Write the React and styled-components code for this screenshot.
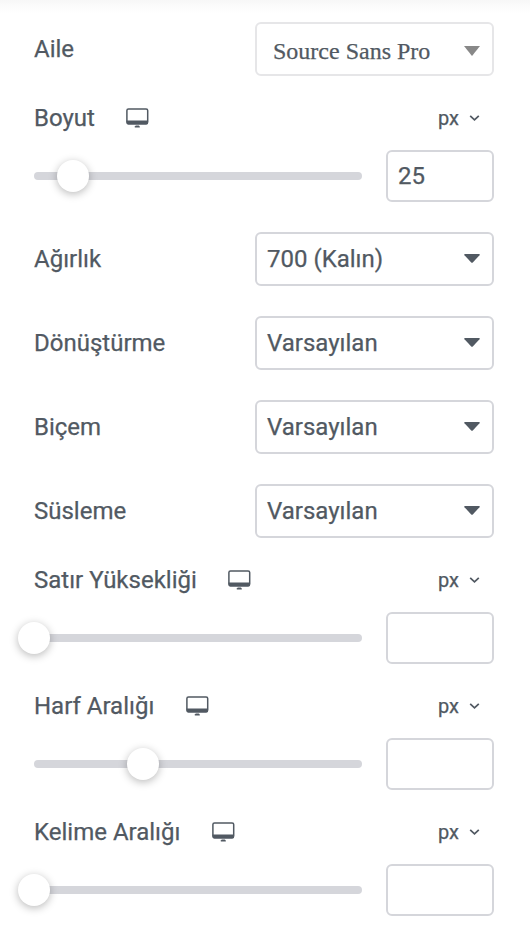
import React from 'react';
import styled, { createGlobalStyle } from 'styled-components';

const GlobalStyle = createGlobalStyle`
  * { box-sizing: border-box; }
  body { margin: 0; background: #fff; }
`;

const Panel = styled.main`
  display: flex;
  flex-direction: column;
  gap: 30px;
  width: 530px;
  height: 940px;
  padding: 22px 36px 0 34px;
  overflow: hidden;
  color: #515962;
  background: linear-gradient(#f7f7f7, #fcfcfc 7px, #fff 14px);
  font: 24px/24px Roboto, sans-serif;
  -webkit-text-stroke: 0.25px #515962;
`;

const SelectRow = styled.div`
  display: flex;
  align-items: center;
  justify-content: space-between;
  height: 54px;
`;

const Label = styled.span`
  white-space: nowrap;
`;

const SelectBox = styled.div`
  display: flex;
  align-items: center;
  justify-content: space-between;
  width: 239px;
  height: 54px;
  padding: ${(p) => (p.$serif ? '4px 12px 0 16px' : '0 12px 0 10px')};
  border: 2px solid ${(p) => (p.$serif ? '#e6e6e8' : '#d5d6db')};
  border-radius: 6px;
  background: #fff;
  font-family: ${(p) => (p.$serif ? '"Liberation Serif", serif' : 'Roboto, sans-serif')};
`;

const FontArrow = styled.svg`
  width: 16px;
  height: 10px;
  margin-top: -1px;
  fill: #888;
`;

const Arrow = styled.svg`
  width: 16px;
  height: 9px;
  margin-bottom: 2px;
  fill: #515962;
`;

const SliderControl = styled.div`
  display: flex;
  flex-direction: column;
  gap: 20px;
`;

const Header = styled.div`
  display: flex;
  align-items: center;
  height: 24px;
`;

const DeviceIcon = styled.svg`
  width: 23px;
  height: 20px;
  margin: 0 0 1px 31.5px;
`;

const Unit = styled.div`
  display: flex;
  align-items: center;
  gap: 10px;
  margin: 0 14px 0 auto;
  font-size: 20px;
`;

const Chevron = styled.svg`
  width: 11px;
  height: 8px;
`;

const SliderRow = styled.div`
  display: flex;
  align-items: center;
  justify-content: space-between;
`;

const Track = styled.div`
  position: relative;
  width: 328px;
  height: 8px;
  border-radius: 4px;
  background: #d5d6db;
`;

const Thumb = styled.div`
  position: absolute;
  top: -12px;
  width: 32px;
  height: 32px;
  margin-left: -16px;
  border-radius: 50%;
  background: #fff;
  box-shadow: 0 2px 8px rgba(0, 0, 0, 0.28);
`;

const NumberBox = styled.div`
  display: flex;
  align-items: center;
  width: 108px;
  height: 52px;
  padding: 0 10px;
  border: 2px solid #d5d6db;
  border-radius: 6px;
  background: #fff;
`;

const selects = [
  ['Ağırlık', '700 (Kalın)'],
  ['Dönüştürme', 'Varsayılan'],
  ['Biçem', 'Varsayılan'],
  ['Süsleme', 'Varsayılan'],
];

const spacings = [
  ['Satır Yüksekliği', 0],
  ['Harf Aralığı', 109.3],
  ['Kelime Aralığı', 0],
];

function Slider({ label, position, value }) {
  return (
    <SliderControl>
      <Header>
        <Label>{label}</Label>
        <DeviceIcon viewBox="0 0 23 20">
          <rect x="0.9" y="0.9" width="20.8" height="14.8" rx="1.6" fill="none" stroke="#515962" strokeWidth="1.5" />
          <path d="M0.6 12.6h21.4v2.3q0 1.6-1.6 1.6H2.2q-1.6 0-1.6-1.6z" fill="#515962" />
          <path d="M9.8 17.6h3l1 .9v1.1h-5v-1.1z" fill="#515962" />
        </DeviceIcon>
        <Unit>
          px
          <Chevron viewBox="0 0 11 8">
            <path d="M1.2 1.8 5.5 5.9 9.8 1.8" fill="none" stroke="#515962" strokeWidth="1.7" />
          </Chevron>
        </Unit>
      </Header>
      <SliderRow>
        <Track>
          <Thumb style={{ left: position }} />
        </Track>
        <NumberBox>{value}</NumberBox>
      </SliderRow>
    </SliderControl>
  );
}

export default function App() {
  return (
    <>
      <GlobalStyle />
      <Panel>
        <SelectRow>
          <Label>Aile</Label>
          <SelectBox $serif>
            Source Sans Pro
            <FontArrow viewBox="0 0 16 10"><path d="M0 0h16L8 10z" /></FontArrow>
          </SelectBox>
        </SelectRow>
        <Slider label="Boyut" position={39.4} value="25" />
        {selects.map(([label, value]) => (
          <SelectRow key={label}>
            <Label>{label}</Label>
            <SelectBox>
              {value}
              <Arrow viewBox="0 0 16 9">
                <path d="M1 0h14q1.3.2.5 1.2L9 8.2q-1 1-2 0L.5 1.2Q-.3.2 1 0z" />
              </Arrow>
            </SelectBox>
          </SelectRow>
        ))}
        {spacings.map(([label, position]) => (
          <Slider key={label} label={label} position={position} />
        ))}
      </Panel>
    </>
  );
}
